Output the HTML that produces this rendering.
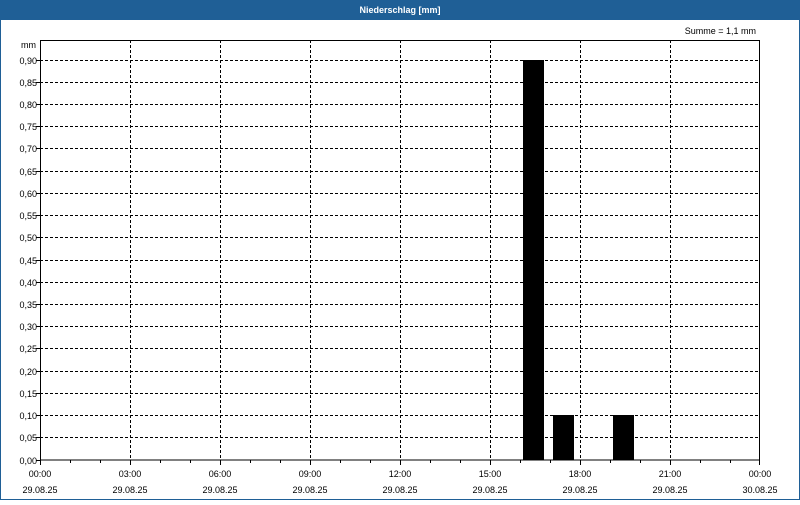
<!DOCTYPE html>
<html><head><style>
html,body{margin:0;padding:0;background:#fff}
svg text{font-family:"Liberation Sans",sans-serif;font-size:9px;fill:#000}
</style></head><body>
<svg width="800" height="500" xmlns="http://www.w3.org/2000/svg" shape-rendering="crispEdges">
<rect x="0" y="0" width="800" height="500" fill="#fff"/>
<rect x="0.5" y="0.5" width="799" height="499" fill="none" stroke="#1f5f96"/>
<rect x="0" y="0" width="800" height="20" fill="#1f5f96"/>
<text x="400" y="13" text-anchor="middle" style="fill:#fff;font-weight:bold;font-size:9px">Niederschlag [mm]</text>
<text x="756" y="34" text-anchor="end">Summe = 1,1 mm</text>
<text x="36" y="48" text-anchor="end">mm</text>
<g stroke="#000" stroke-dasharray="3,2" stroke-width="1">
<line x1="40" x2="760" y1="437.5" y2="437.5"/><line x1="40" x2="760" y1="415.5" y2="415.5"/><line x1="40" x2="760" y1="393.5" y2="393.5"/><line x1="40" x2="760" y1="371.5" y2="371.5"/><line x1="40" x2="760" y1="348.5" y2="348.5"/><line x1="40" x2="760" y1="326.5" y2="326.5"/><line x1="40" x2="760" y1="304.5" y2="304.5"/><line x1="40" x2="760" y1="282.5" y2="282.5"/><line x1="40" x2="760" y1="260.5" y2="260.5"/><line x1="40" x2="760" y1="237.5" y2="237.5"/><line x1="40" x2="760" y1="215.5" y2="215.5"/><line x1="40" x2="760" y1="193.5" y2="193.5"/><line x1="40" x2="760" y1="171.5" y2="171.5"/><line x1="40" x2="760" y1="148.5" y2="148.5"/><line x1="40" x2="760" y1="126.5" y2="126.5"/><line x1="40" x2="760" y1="104.5" y2="104.5"/><line x1="40" x2="760" y1="82.5" y2="82.5"/><line x1="40" x2="760" y1="60.5" y2="60.5"/>
<line x1="130.5" x2="130.5" y1="40" y2="460"/><line x1="220.5" x2="220.5" y1="40" y2="460"/><line x1="310.5" x2="310.5" y1="40" y2="460"/><line x1="400.5" x2="400.5" y1="40" y2="460"/><line x1="490.5" x2="490.5" y1="40" y2="460"/><line x1="580.5" x2="580.5" y1="40" y2="460"/><line x1="670.5" x2="670.5" y1="40" y2="460"/>
</g>
<g fill="#000">
<rect x="523" y="60" width="21" height="400"/>
<rect x="553" y="415" width="21" height="45"/>
<rect x="613" y="415" width="21" height="45"/>
</g>
<rect x="40.5" y="40.5" width="719" height="419.5" fill="none" stroke="#000"/>
<g stroke="#000">
<path d="M40.5 460v5M70.5 460v3M100.5 460v3M130.5 460v5M160.5 460v3M190.5 460v3M220.5 460v5M250.5 460v3M280.5 460v3M310.5 460v5M340.5 460v3M370.5 460v3M400.5 460v5M430.5 460v3M460.5 460v3M490.5 460v5M520.5 460v3M550.5 460v3M580.5 460v5M610.5 460v3M640.5 460v3M670.5 460v5M700.5 460v3M730.5 460v3M759.5 460v5"/>
<path d="M36 460.5h4M36 437.5h4M36 415.5h4M36 393.5h4M36 371.5h4M36 348.5h4M36 326.5h4M36 304.5h4M36 282.5h4M36 260.5h4M36 237.5h4M36 215.5h4M36 193.5h4M36 171.5h4M36 148.5h4M36 126.5h4M36 104.5h4M36 82.5h4M36 60.5h4"/>
</g>
<g text-anchor="end">
<text x="37" y="464">0,00</text><text x="37" y="441">0,05</text><text x="37" y="419">0,10</text><text x="37" y="397">0,15</text><text x="37" y="375">0,20</text><text x="37" y="352">0,25</text><text x="37" y="330">0,30</text><text x="37" y="308">0,35</text><text x="37" y="286">0,40</text><text x="37" y="264">0,45</text><text x="37" y="241">0,50</text><text x="37" y="219">0,55</text><text x="37" y="197">0,60</text><text x="37" y="175">0,65</text><text x="37" y="152">0,70</text><text x="37" y="130">0,75</text><text x="37" y="108">0,80</text><text x="37" y="86">0,85</text><text x="37" y="64">0,90</text>
</g>
<g text-anchor="middle">
<text x="40" y="477">00:00</text><text x="40" y="493">29.08.25</text>
<text x="130" y="477">03:00</text><text x="130" y="493">29.08.25</text>
<text x="220" y="477">06:00</text><text x="220" y="493">29.08.25</text>
<text x="310" y="477">09:00</text><text x="310" y="493">29.08.25</text>
<text x="400" y="477">12:00</text><text x="400" y="493">29.08.25</text>
<text x="490" y="477">15:00</text><text x="490" y="493">29.08.25</text>
<text x="580" y="477">18:00</text><text x="580" y="493">29.08.25</text>
<text x="670" y="477">21:00</text><text x="670" y="493">29.08.25</text>
<text x="760" y="477">00:00</text><text x="760" y="493">30.08.25</text>
</g>
</svg>
</body></html>
